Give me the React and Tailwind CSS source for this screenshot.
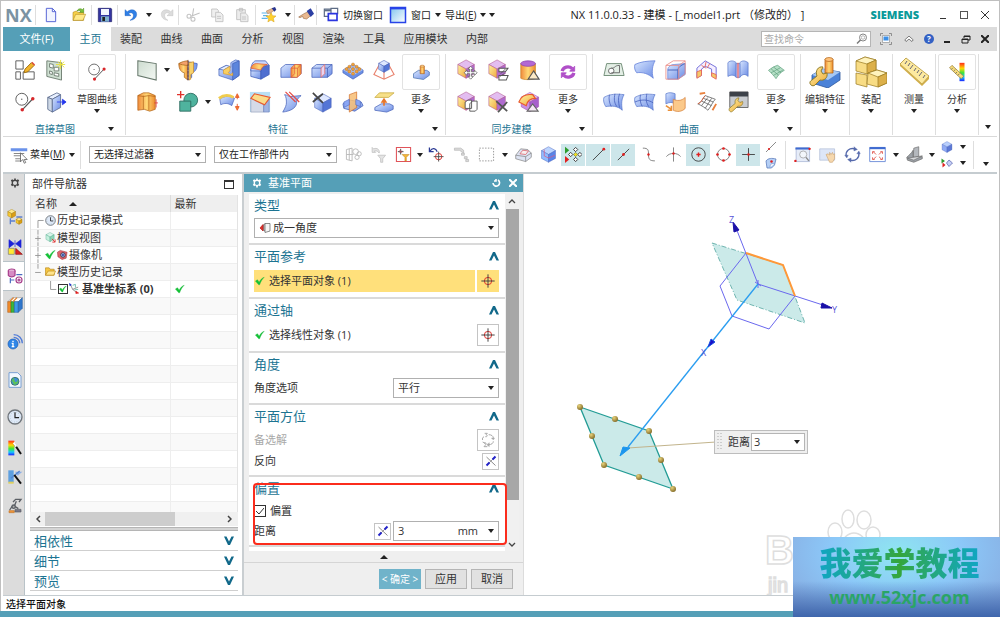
// src/App.jsx
import React, { useState } from 'react';

// ---------- helpers de dibujo ----------

const Cube = ({ x = 12, y = 12, r = 9, t = '#dfe8ff', l = 'url(#blue)', d = '#5475d6', s = '#4560b8' }) => {
  const w = r * 0.9;
  const h = r * 0.5;
  return (
    <g stroke={s} strokeWidth=".6" strokeLinejoin="round">
      <path d={`M${x} ${y - r} L${x + w} ${y - h} L${x} ${y} L${x - w} ${y - h}Z`} fill={t} />
      <path d={`M${x - w} ${y - h} L${x} ${y} V${y + r} L${x - w} ${y + h}Z`} fill={l} />
      <path d={`M${x + w} ${y - h} L${x} ${y} V${y + r} L${x + w} ${y + h}Z`} fill={d} />
    </g>
  );
};

const SyncCube = () => <Cube x={11} y={11} r={10} t="#e3bdf0" l="url(#gold)" d="#b06bd0" s="#b0578f" />;

const Wrench = ({ fill = 'url(#gold)' }) => (
  <path
    d="M3 22c-1-1-1-2.500 0-3.500l6-5c-1-3 1-6 4-6l-1 3 2 2 3-1c1 3-2 6-5 5l-6 5.500c-1 1-2 1-3 0z"
    fill={fill}
    stroke="#8f7b2a"
    strokeWidth=".8"
  />
);

const Defs = () => (
  <svg className="absolute" width="0" height="0" aria-hidden="true">
    <defs>
      <linearGradient id="blue" x1="0" y1="0" x2="1" y2="1">
        <stop offset="0" stopColor="#d8e6ff" />
        <stop offset="1" stopColor="#6a8be4" />
      </linearGradient>
      <linearGradient id="gold" x1="0" y1="0" x2="1" y2="1">
        <stop offset="0" stopColor="#fff0a0" />
        <stop offset="1" stopColor="#eea93a" />
      </linearGradient>
      <linearGradient id="orange" x1="0" y1="0" x2="1" y2="0">
        <stop offset="0" stopColor="#f08a3c" />
        <stop offset=".5" stopColor="#ffd977" />
        <stop offset="1" stopColor="#ee8c2e" />
      </linearGradient>
      <linearGradient id="plane" x1="0" y1="0" x2="1" y2="1">
        <stop offset="0" stopColor="#cddccf" />
        <stop offset="1" stopColor="#f4f8f4" />
      </linearGradient>
      <linearGradient id="rainbow" x1="0" y1="0" x2="0" y2="1">
        <stop offset="0" stopColor="#ff2a1a" />
        <stop offset=".3" stopColor="#ffd800" />
        <stop offset=".55" stopColor="#39e639" />
        <stop offset=".78" stopColor="#18c8ff" />
        <stop offset="1" stopColor="#1a22ff" />
      </linearGradient>
      <linearGradient id="pane" x1="0" y1="0" x2="1" y2="1">
        <stop offset="0" stopColor="#7fc4ee" />
        <stop offset="1" stopColor="#ffffff" />
      </linearGradient>
      <radialGradient id="ball" cx=".35" cy=".3" r=".8">
        <stop offset="0" stopColor="#e8d27a" />
        <stop offset="1" stopColor="#7a6220" />
      </radialGradient>
    </defs>
  </svg>
);

// todos los iconos en una caja de 24x24 (los grandes en 32x32)
const icons = {
  // acceso rapido
  newFile: <path d="M5 2h9l5 5v15H5zM14 2v5h5" fill="#f2f5ff" stroke="#5a68d6" strokeWidth="1.500" />,
  open: (
    <g stroke="#b08a1c" strokeWidth=".9">
      <path d="M3 20V8l5-2 2 2h9v12z" fill="#f6d04a" />
      <path d="M3 20l4-9h15l-4 9z" fill="#ffe98a" />
      <path d="M9 6c2-4 6-4 8-2l2-2v6h-6l2-2c-2-1-3-1-6 0z" fill="#7cc43c" stroke="#4c8d1d" />
    </g>
  ),
  save: (
    <g>
      <path d="M2 2h19l1 1v19H2z" fill="#3434a0" stroke="#20206a" />
      <path d="M6 3h12v9H6z" fill="#f4f6ff" />
      <path d="M6 14h12v8H6z" fill="#7fb1cf" />
      <path d="M8 15h4v6H8z" fill="#222" />
    </g>
  ),
  undo: <path d="M3 4v9h9L8.500 10c3-3 8-1 7 4-.5 3-3 5-5 6 6-.5 10-4 10-9 0-7-8-9-14-4z" fill="#2f7fe6" stroke="#1b5cb8" strokeWidth=".6" />,
  redo: <path d="M21 4v9h-9l3.500-3c-3-3-8-1-7 4 .5 3 3 5 5 6-6-.5-10-4-10-9 0-7 8-9 14-4z" fill="#dcdcdc" stroke="#bbb" strokeWidth=".6" />,
  cut: (
    <g fill="none" stroke="#c2c2c2" strokeWidth="1.600">
      <path d="M13 2 11 14M22 9 9 14" />
      <circle cx="6" cy="14" r="3" />
      <circle cx="12" cy="18.500" r="3" />
    </g>
  ),
  copy: (
    <g fill="#efefef" stroke="#bdbdbd" strokeWidth="1.200">
      <path d="M4 3h8l2 2v10H4z" />
      <path d="M10 8h7l4 4v10H10zM12 14h6M12 17h6" />
    </g>
  ),
  paste: (
    <g fill="#ececec" stroke="#bdbdbd" strokeWidth="1.200">
      <path d="M4 4h13v15H4zM8 2h5v4H8z" />
      <path d="M10 9h7l4 4v9H10zM12 15h6M12 18h6" />
    </g>
  ),
  star: (
    <g>
      <path d="M1 9h9M3 13h7M1 17h9" stroke="#5db4e8" strokeWidth="1.800" />
      <path d="M15 8l2.200 5 5.300.5-4 3.600 1.200 5.300-4.700-2.800-4.700 2.800 1.200-5.300-4-3.600 5.300-.5z" fill="#ffd02e" stroke="#d19b12" strokeWidth=".7" />
      <path d="M8 6l9-4 3 3-6 4-4 1z" fill="#e8b88f" stroke="#8a5a33" strokeWidth=".6" />
      <path d="M16 2l5-2 2 4-3 3z" fill="#27348f" />
    </g>
  ),
  hand: (
    <g>
      <path d="M1 15l8-5 6-3 4 6-6 5-5-1-1-3-4 2z" fill="#e8b88f" stroke="#8a5a33" strokeWidth=".8" />
      <path d="M13 6l6-4 5 8-5 5z" fill="#2c3fa3" />
    </g>
  ),
  switchWin: (
    <g fill="#fff" strokeWidth="1.800">
      <path d="M2 3h14v11H2z" stroke="#5d6c85" />
      <path d="M2 5h14" stroke="#5d6c85" strokeWidth="3" />
      <path d="M12 2h10v8H12z" stroke="#5d6c85" />
      <path d="M8 10h13v10H8z" stroke="#2b35e0" strokeWidth="2.500" />
    </g>
  ),
  window: (
    <g>
      <path d="M2 2h20v20H2z" fill="url(#pane)" stroke="#2743e8" strokeWidth="2" />
      <path d="M2 3h20" stroke="#2743e8" strokeWidth="3" />
    </g>
  ),
  // dibujo directo
  sketch: (
    <g fill="#fff" stroke="#555" strokeWidth="1">
      <path d="M2 2h8v9H2zM2 14h5v8H2zM10 14h12v8H10z" />
      <path d="M11 15l1-4 7-7 3 3-7 7z" fill="#f3b52c" stroke="#9a6b10" />
      <path d="M19 4l3 3 1-1-3-3z" fill="#e1483a" stroke="none" />
    </g>
  ),
  taskSketch: (
    <g stroke="#6c7b6e" strokeWidth="1">
      <path d="M2 2l16 2v19L2 19z" fill="#cfe0d2" />
      <path d="M5 5l4 1v4l-4-1zM5 13l3 1v3l-3-1zM10 9h5v4h-5zM10 15l5 1v3l-5-1z" fill="#fff" />
      <path d="M17 1v10M12 6h10M14 3l7 6M21 3l-7 6" stroke="#e8df3a" />
    </g>
  ),
  circleLine: (
    <g fill="none">
      <circle cx="8.500" cy="9" r="6.500" stroke="#555" />
      <circle cx="8.500" cy="9" r=".7" fill="#555" />
      <path d="M9 20.500 20 9" stroke="#555" strokeWidth="1.200" />
      <circle cx="9" cy="20.500" r="1.900" fill="#d8262a" />
      <circle cx="20.500" cy="8.500" r="1.900" fill="#d8262a" />
    </g>
  ),
  extrude: (
    <g stroke="#5a6a8c" strokeWidth=".9">
      <path d="M3 7l10-5 4 2-9 5z" fill="#e8f0ff" />
      <path d="M3 7l5 2v14l-5-3z" fill="#cfd9e6" />
      <path d="M8 9l9-5v14l-9 5z" fill="url(#blue)" />
      <path d="M13 12h6M19 9l4 3-4 3z" stroke="#2235ee" fill="#2235ee" />
    </g>
  ),
  // caracteristicas
  datum: <path d="M2 2l20 3v18L2 18z" fill="url(#plane)" stroke="#66776b" strokeWidth="1.100" />,
  revolve: (
    <g stroke="#a5661c" strokeWidth=".8">
      <path d="M2 5l10-2v20l-4-3v-5c-5-1-6-6-6-10z" fill="url(#orange)" />
      <path d="M22 5l-10-2v20l4-3v-5c5-1 6-6 6-10z" fill="#7d9eec" stroke="#3e5cb6" />
      <path d="M13 4l5-1v12l-3 2v5l-2 1z" fill="#f8d26a" stroke="#c98a2a" />
      <path d="M2 5c3-2 7-3 10-3v5C8 7 4 6 2 5z" fill="#f3a06a" />
      <path d="M12 1v22" stroke="#633" strokeDasharray="3 1" />
    </g>
  ),
  column: (
    <g stroke="#b3651a" strokeWidth=".8">
      <path d="M2 5l6-3h6l7 3v15l-6 2-6-2-7 1z" fill="url(#orange)" />
      <path d="M8 5v15M14 5v16M2 5l6 1 6-1 7 1" fill="none" />
      <path d="M22 9v9M20 13h4" stroke="#e0322c" />
    </g>
  ),
  unite: (
    <g>
      <circle cx="15" cy="10" r="7.500" fill="#4fb39e" stroke="#2f6f62" />
      <path d="M3 11h12v11H3z" fill="#4fb39e" stroke="#2f6f62" />
      <path d="M0 4h8M4 0v8" stroke="#e0322c" strokeWidth="1.500" />
    </g>
  ),
  bracket: (
    <g stroke="#3c5bb5" strokeWidth=".7">
      <path d="M1 11l8-4 5 2V4l5-3 4 1v16l-7 5-15-5z" fill="url(#blue)" />
      <path d="M16 5l7-3v16l-7 5z" fill="#5c85dc" />
      <path d="M1 11l8-4 4 1-7 4z" fill="#e6efff" />
      <path d="M6 12l7-4v5l-2 2 3 2 2-2v3l-10-2z" fill="#f9cf62" stroke="#d99a2a" />
    </g>
  ),
  blend: (
    <g stroke="#3c5bb5" strokeWidth=".8">
      <path d="M2 11v8l11 3V13z" fill="url(#blue)" />
      <path d="M13 22V13c0-4 3-6 9-6v10z" fill="#4f6fd0" />
      <path d="M7 2h11l4 5c-6 0-9 2-9 6H2c0-6 2-10 5-11z" fill="#c7d8ff" />
      <path d="M2 10c1-3 3-5 6-5l12 1c-4 1-6 3-7 6z" fill="url(#orange)" stroke="#df5a3a" />
    </g>
  ),
  chamfer: (
    <g stroke="#4560b8" strokeWidth=".8">
      <path d="M1 10l5-4h17v10l-5 4H1z" fill="url(#blue)" />
      <path d="M12 10l4-4h7v10l-4 4h-7z" fill="url(#orange)" stroke="#df5a3a" />
      <path d="M12 10h7v10M19 10l4-4M16 6v10l-4 4" fill="none" stroke="#df5a3a" />
    </g>
  ),
  shell: (
    <g stroke="#4560b8" strokeWidth=".8">
      <path d="M1 10l5-4h17v10l-5 4H1z" fill="url(#blue)" />
      <path d="M1 10h17v10M18 10l5-4" fill="none" />
      <path d="M11 10l4-4v10l-4 4z" fill="#e7d4f2" stroke="#e6675f" />
    </g>
  ),
  pattern: (
    <g>
      <path d="M1 12l11-6 11 6v3l-11 7-11-7z" fill="#6a8fe4" stroke="#4560b8" strokeWidth=".7" />
      <path d="M1 12l11-6 11 6-11 6z" fill="#a9c1f7" />
      <g fill="#f0a13c" stroke="#a8600f" strokeWidth=".4">
        <circle cx="12" cy="6" r="1.700" /><circle cx="8" cy="8.500" r="1.700" /><circle cx="16" cy="8.500" r="1.700" />
        <circle cx="5" cy="11" r="1.700" /><circle cx="12" cy="11" r="1.700" /><circle cx="19" cy="11" r="1.700" />
        <circle cx="8" cy="13.500" r="1.700" /><circle cx="16" cy="13.500" r="1.700" /><circle cx="12" cy="16" r="1.700" />
      </g>
    </g>
  ),
  pyramid: (
    <g>
      <path d="M8 4 1 17l11 5 11-5-7-13M12 22v-9" fill="none" stroke="#e8806c" strokeWidth="1.200" />
      <Cube x={12} y={8} r={6.5} />
    </g>
  ),
  offsetFace: (
    <g>
      <path d="M2 9c5-4 11-4 16-1l-3 8c-4-3-8-3-12-1z" fill="url(#blue)" stroke="#4560b8" strokeWidth=".7" />
      <path d="M1 8c5-4 11-4 16-1" fill="none" stroke="#f0cc4e" strokeWidth="3" />
      <path d="M21 5v4M21 14v4M19 7l2-4 2 4zM19 17l2 4 2-4z" stroke="#e9582c" fill="#f0932e" />
    </g>
  ),
  draft: (
    <g>
      <path d="M1 1h22v22H1z" fill="#b9e0f5" />
      <path d="M2 8l14 7v8H2z" fill="#d5dbe8" stroke="#8793b0" strokeWidth=".6" />
      <path d="M16 15l6-6v14h-6z" fill="#9fb4e2" stroke="#6478b4" strokeWidth=".6" />
      <path d="M2 8l4-5 17 4-6 8z" fill="#fadc8a" stroke="#e9582c" strokeWidth="1.200" />
    </g>
  ),
  trim: (
    <g>
      <path d="M5 4c3 0 3 2 7 2l11-1c-4 3-5 6-5 9-1 5-7 8-15 9 3-5 4-8 4-10S7 6 5 4z" fill="url(#blue)" stroke="#4560b8" strokeWidth=".8" />
      <path d="M6 1l11 11M10 1l11 11" stroke="#e64a44" strokeWidth="1.300" />
    </g>
  ),
  deleteBody: (
    <g>
      <Cube x={13} y={13} r={10} />
      <path d="M2 2l11 11M13 3 2 12" stroke="#444" strokeWidth="1.800" />
    </g>
  ),
  mirror: (
    <g>
      <path d="M1 14l8-4 12 2 2 4-9 6-12-3z" fill="url(#blue)" stroke="#4560b8" strokeWidth=".8" />
      <path d="M8 4l8-3v17l-8 5z" fill="#f7bd73" fillOpacity=".85" stroke="#d3722c" strokeWidth=".8" />
      <path d="M2 12l6-3v6l-6 3zM15 9l5 2v6l-5-2z" fill="#8aa6f4" stroke="#4560b8" strokeWidth=".6" />
    </g>
  ),
  emboss: (
    <g>
      <path d="M2 7l5-5h16l-6 5z" fill="#f7e089" stroke="#c4a63a" strokeWidth=".8" />
      <path d="M2 18l7-4h9l4 2v4l-7 3-13-2z" fill="url(#blue)" stroke="#4560b8" strokeWidth=".8" />
      <path d="M12 16v-4M10 12l2-3 2 3z" stroke="#e8762a" fill="#f0932e" strokeWidth="1.800" />
    </g>
  ),
  moreFeature: (
    <g>
      <path d="M3 14l6-4h10l3 2v4l-7 5-12-2z" fill="url(#blue)" stroke="#3c66a8" strokeWidth=".8" />
      <path d="M11 5h5v9h-5z" fill="url(#orange)" stroke="#b3651a" strokeWidth=".8" />
      <ellipse cx="13.500" cy="5" rx="2.500" ry="1.200" fill="#ffd08a" stroke="#b3651a" strokeWidth=".6" />
    </g>
  ),
  // modelado sincronico
  moveFace: (
    <g>
      <SyncCube />
      <path d="M16 8l3 3h-2v3h3v-2l3 3-3 3v-2h-3v3h2l-3 3-3-3h2v-3h-3v2l-3-3 3-3v2h3v-3h-2z" fill="#fff" stroke="#666" strokeWidth=".9" />
    </g>
  ),
  replaceFace: (
    <g>
      <SyncCube />
      <path d="M13 10h10l-3 4h-7zM13 18h10l-2 5h-8z" fill="#fff" stroke="#555" strokeWidth="1.100" />
      <path d="M20 11l-5 5M14 19l5-3" stroke="#555" />
    </g>
  ),
  cylinder: (
    <g>
      <path d="M3 5v16c2 2 14 2 16 0V5z" fill="url(#orange)" stroke="#c08020" strokeWidth=".7" />
      <ellipse cx="11" cy="5" rx="8" ry="3" fill="#b268d4" stroke="#8a3fae" strokeWidth=".8" />
      <path d="M17 13l6 9H11z" fill="#fbe9c6" stroke="#555" strokeWidth="1.200" />
    </g>
  ),
  copyFace: (
    <g>
      <SyncCube />
      <path d="M10 12l3-2h4v9h-7zM15 14l3-3h5v9l-2 2h-6z" fill="#fff" stroke="#555" strokeWidth="1" />
    </g>
  ),
  deleteFace: (
    <g>
      <SyncCube />
      <path d="M10 11l12 11M22 12 12 23" stroke="#555" strokeWidth="2" />
    </g>
  ),
  resizeBlend: (
    <g>
      <Cube x={13} y={12} r={10.5} t="#e3bdf0" l="#c98fe0" d="#a75fcc" s="#a04cac" />
      <path d="M1 12C3 6 8 3 16 4l3 4c-6 0-9 3-10 8z" fill="url(#gold)" stroke="#e9582c" strokeWidth="1.300" />
      <path d="M16 14l6 8H10z" fill="#f5e8f5" stroke="#666" strokeWidth="1.200" />
    </g>
  ),
  moreSync: (
    <g fill="none" stroke="#b04fc8" strokeWidth="4">
      <path d="M5 11c1-5 8-7 12-3M19 13c-1 5-8 7-12 3" />
      <path d="M20 5v6h-6zM4 19v-6h6z" fill="#b04fc8" strokeWidth="1" />
    </g>
  ),
  // superficie
  loft: (
    <g fill="none" stroke="#666" strokeWidth="1">
      <path d="M4 5h16l3 13H1z" fill="#e3eee5" stroke="#6d8a74" />
      <circle cx="9" cy="13" r="3" fill="#fff" />
      <path d="M9 10c5 0 3-3 9-3v8H9" />
    </g>
  ),
  ruled: <path d="M1 6c6-3 14-4 22-4-3 5-4 12-2 19-5-5-12-7-18-6-2-2-3-6-2-9z" fill="url(#blue)" stroke="#6a86dc" strokeWidth=".9" />,
  studio: (
    <g>
      <path d="M3 12c0-4 4-6 7-6l12-1v12l-8 5H3z" fill="url(#blue)" stroke="#6a86dc" strokeWidth=".8" />
      <path d="M14 22v-9c0-4 3-6 8-8M3 12h11" fill="none" stroke="#4560b8" />
      <path d="M1 7l8-5h13v14l-7 6H1zM1 7h14v15M15 7l7-5" fill="none" stroke="#ea8a84" strokeWidth=".9" />
    </g>
  ),
  sweep: (
    <g strokeWidth="1">
      <path d="M1 10l9-8 12 7v11l-5-2v-7l-7-3-4 3v7l-5 2z" fill="#f6efff" stroke="#6a68d8" />
      <path d="M6 7l5 3M11 3l-1 5M15 5l-3 5" stroke="#e6675f" />
      <path d="M1 14l5-2v6l-5 3zM17 15l5 2v5l-5-3z" fill="#f5c968" stroke="#e6675f" />
    </g>
  ),
  thicken: (
    <g stroke="#5a78cc" strokeWidth=".8">
      <path d="M1 4c3-3 7-2 9 0v16c-2-3-6-3-9-1z" fill="url(#blue)" />
      <path d="M14 4c3-3 6-2 9 0v15c-3-3-6-3-9 1z" fill="url(#blue)" />
      <path d="M10 5h4v15h-4z" fill="#d9c7ee" />
      <path d="M12 4v17" stroke="#e6675f" strokeWidth="1.300" />
    </g>
  ),
  meshA: (
    <g fill="none" stroke="#5a78cc" strokeWidth=".8">
      <path d="M1 7c7-4 14-4 22-3-3 5-3 10-2 17-5-5-12-5-18-4-2-3-3-7-2-10z" fill="url(#blue)" />
      <path d="M7 4c-1 5 0 9 2 13M13 3c-1 6-1 9 2 14M18 3c-2 6-1 9 0 15" stroke="#3e58b8" />
    </g>
  ),
  meshB: (
    <g fill="none" stroke="#5a78cc" strokeWidth=".8">
      <path d="M1 7c7-4 14-4 22-3-3 5-3 10-2 17-5-5-12-5-18-4-2-3-3-7-2-10z" fill="url(#blue)" />
      <path d="M7 4c-1 5 0 9 2 13M14 3c-1 6-1 9 2 14M1 12c7-3 14-3 20 1" stroke="#3e58b8" />
    </g>
  ),
  surfExt: (
    <g strokeWidth=".8">
      <path d="M1 3c4-2 7-1 10 0v11c-3-2-6-2-10 0z" fill="url(#blue)" stroke="#5a78cc" />
      <path d="M9 9c4 2 9 2 13-2v12c-4 4-9 4-13 2z" fill="#fbc98a" stroke="#d4803a" />
      <path d="M1 16l6 4M7 16v5H3" fill="none" stroke="#ea9038" strokeWidth="1.800" />
    </g>
  ),
  xform: (
    <g fill="none" stroke="#555" strokeWidth=".8">
      <path d="M2 14c4-1 5-6 8-9l11 4c-3 3-4 7-8 12-3-3-7-5-11-7z" fill="#fff" />
      <path d="M6 11l11 5M8 8l11 4M6 16l7-9M10 19l7-11" />
      <path d="M4 3l6-1M22 14l-4 7" stroke="#e9813e" strokeWidth="2" />
      <path d="M2 14c4-1 5-6 8-9" stroke="#e9582c" />
    </g>
  ),
  winWrench: (
    <g>
      <path d="M3 1h20v17H3z" fill="#c9ccd0" stroke="#666" />
      <path d="M3 1h20v5H3z" fill="#3d4249" />
      <Wrench />
    </g>
  ),
  moreSurf: (
    <g stroke="#5c9d7c" strokeWidth=".8" fill="none">
      <path d="M3 10c4-3 7-5 11-6l8 6c-4 2-7 5-10 10-3-4-6-7-9-10z" fill="#b5dfc6" />
      <path d="M6 8l9 8M9 6l9 7M6 13l11-6M9 16l11-6" />
    </g>
  ),
  // grandes
  editFeature: (
    <g>
      <path d="M3 19l11-6 17 3v8l-12 8-16-5z" fill="#4b82d8" stroke="#2b569c" strokeWidth=".8" />
      <path d="M3 19l11-6 17 3-12 8z" fill="#a6c8f4" />
      <path d="M16 3h8v14h-8z" fill="url(#orange)" stroke="#b3651a" strokeWidth=".8" />
      <ellipse cx="20" cy="3.500" rx="4" ry="2" fill="#ffc27a" stroke="#b3651a" strokeWidth=".7" />
      <path d="M2 29c-2-2-1-4 1-5l5-4c-2-5 1-10 6-9l-2 4 2 3 4-1c1 5-3 8-7 7l-5 5c-1 1-3 1-4 0z" fill="url(#gold)" stroke="#8f7b2a" />
    </g>
  ),
  assembly: (
    <g stroke="#98781f" strokeWidth=".7">
      <path d="M1 5l9-4 11 3v10l-9 4-11-3z" fill="#f8dc84" />
      <path d="M1 5l9-4 11 3-9 4z" fill="#fff3bd" />
      <path d="M21 4v10l-9 4V8z" fill="#dcb04a" />
      <path d="M1 17l11 2v12L1 28z" fill="#f8dc84" />
      <path d="M13 17l9-3 10 3v10l-9 4-11-3z" fill="#f8dc84" />
      <path d="M13 17l9-3 10 3-9 4z" fill="#fff3bd" />
      <path d="M32 17v10l-9 4V21z" fill="#dcb04a" />
    </g>
  ),
  ruler: (
    <g>
      <path d="M2 8l6-6 23 18-7 8z" fill="#fdeaa0" stroke="#b59636" strokeWidth=".8" />
      <path d="M24 28l7-8v3l-7 7L2 10V8z" fill="#d0ad48" />
      <path d="M9 5l-2 3M12 7l-2 3M15 9l-3 4M18 12l-2 3M21 14l-2 3M24 16l-3 4M27 19l-2 3" stroke="#667" />
    </g>
  ),
  analyze: (
    <g>
      <path d="M15 1h6v22h-6z" fill="url(#rainbow)" />
      <path d="M3 7l3-3 14 13-3 3z" fill="#f7dc7a" stroke="#8f7530" strokeWidth=".8" />
      <path d="M7 7l-2 2M10 9l-2 2M12 12l-2 2M15 14l-2 2" stroke="#555" strokeWidth=".8" />
    </g>
  ),
  // barra de seleccion
  menu: (
    <g>
      <path d="M1 3h22v4H1z" fill="#6a92ea" />
      <path d="M5 10h14M5 13h10M7 17h9M7 20h8" stroke="#888" strokeWidth="1.500" />
      <path d="M14 9v12l3-3 2 5 2-1-2-4h4z" fill="#fff" stroke="#555" />
    </g>
  ),
  ghostGrid: (
    <g fill="none" stroke="#b9b9b9" strokeWidth="1.300">
      <path d="M2 5l8-2v18l-8-2zM2 12h10M6 4v16" />
      <circle cx="15" cy="8" r="4" /><circle cx="20" cy="11" r="3" /><circle cx="17" cy="16" r="3" />
    </g>
  ),
  ghostFilter: (
    <g fill="#e4e4e4" stroke="#bbb">
      <path d="M3 2v7h5L6 7c4-1 5 1 7 3 1-5-3-8-8-6z" />
      <path d="M11 13h11l-4 5v5h-3v-5z" />
    </g>
  ),
  filter: (
    <g>
      <path d="M2 2h20v20H2z" fill="#fff" stroke="#e0545a" strokeWidth="1.500" />
      <path d="M8 4v8M4 8h8" stroke="#333" strokeWidth="1.200" />
      <path d="M6 6l4 4M10 6l-4 4" stroke="#d9444a" strokeWidth=".8" />
      <path d="M10 12h10l-4 4v5h-2v-5z" fill="#f4b638" stroke="#bd7e12" strokeWidth=".7" />
    </g>
  ),
  undoTarget: (
    <g fill="none">
      <path d="M2 2v6h6M3 7c3-5 8-4 10 1" stroke="#2b3a94" strokeWidth="1.800" />
      <circle cx="15" cy="15" r="4.500" stroke="#e0322c" strokeWidth="1.300" />
      <path d="M15 8v14M8 15h14" stroke="#444" strokeWidth="1.200" />
    </g>
  ),
  ghostTree: (
    <g fill="#dadada" stroke="#b5b5b5">
      <path d="M2 3h9l4 3v4L9 6H2zM12 10h4v3h-4zM16 15h4v3h-4zM18 19h4v3h-4z" />
    </g>
  ),
  marquee: <path d="M2 3h20v18H2z" fill="none" stroke="#888" strokeWidth="1.200" strokeDasharray="2 2" />,
  slab: (
    <g stroke="#777" strokeWidth=".9">
      <path d="M1 13L8 4l10 1 5 5v6l-8 6-14-4z" fill="#dde3f2" />
      <path d="M1 13l14 2 8-5M15 15v7" fill="none" />
      <path d="M7 11l4-5 8 1-4 5z" fill="#f7f0f0" stroke="#d9444a" />
    </g>
  ),
  solidCube: (
    <g>
      <Cube x={12} y={12} r={11} t="#bcd5ff" l="#8fbaff" d="#5a84e8" />
      <path d="M6 5v9l6 3 9-4" fill="none" stroke="#e0587e" />
    </g>
  ),
  snapAll: (
    <g>
      <path d="M0 1l6 5-6 5z" fill="#2c9c2c" />
      <path d="M0 14l6 5-6 5z" fill="#e02020" />
      <g fill="#fff" stroke="#333" strokeWidth="1.300">
        <path d="M15 2l3 3-3 3-3-3zM15 16l3 3-3 3-3-3zM8 9l3 3-3 3-3-3zM21 9l3 3-3 3-3-3z" />
      </g>
      <path d="M15 9l3 3-3 3-3-3z" fill="#f2e21e" stroke="#333" strokeWidth=".6" />
    </g>
  ),
  endPoint: (
    <g>
      <path d="M4 20 19 5" stroke="#333" strokeWidth="1.200" />
      <circle cx="19.500" cy="4.500" r="2" fill="#e02020" />
    </g>
  ),
  midPoint: (
    <g>
      <path d="M4 20 20 4" stroke="#333" strokeWidth="1.200" />
      <circle cx="12" cy="12" r="2" fill="#e02020" />
    </g>
  ),
  controlPoint: (
    <g fill="none">
      <path d="M4 3c8 0 8 3 8 9s1 9 9 9" stroke="#555" />
      <circle cx="12" cy="12" r="1.700" fill="#e02020" />
    </g>
  ),
  intersection: (
    <g fill="none">
      <path d="M12 2v20M2 15c4-6 16-6 20 0" stroke="#555" />
      <circle cx="12" cy="10.500" r="1.700" fill="#e02020" />
    </g>
  ),
  arcCenter: (
    <g fill="none">
      <circle cx="12" cy="12" r="9.500" stroke="#333" strokeWidth="1.200" />
      <path d="M12 9v6M9 12h6" stroke="#e02020" strokeWidth="2" />
    </g>
  ),
  quadrant: (
    <g fill="#e02020">
      <circle cx="12" cy="12" r="8.500" fill="none" stroke="#555" />
      <circle cx="12" cy="3.500" r="1.900" /><circle cx="12" cy="20.500" r="1.900" />
      <circle cx="3.500" cy="12" r="1.900" /><circle cx="20.500" cy="12" r="1.900" />
    </g>
  ),
  existPoint: (
    <g>
      <path d="M12 3v18M3 12h18" stroke="#333" strokeWidth="1.200" />
      <circle cx="12" cy="12" r="1.800" fill="#e02020" />
    </g>
  ),
  onCurve: (
    <g>
      <path d="M2 22 22 2" stroke="#666" strokeWidth="1.500" />
      <circle cx="8" cy="16" r="2.200" fill="#e02020" />
    </g>
  ),
  onFace: (
    <g>
      <path d="M2 8c4-6 12-6 20-4l-3 12-6 6H4z" fill="#b5cff5" stroke="#5476b8" strokeWidth="1.500" />
      <path d="M10 20c0-6 4-8 9-6" fill="#fff" stroke="#5476b8" />
      <circle cx="13" cy="9" r="2.500" fill="#e02020" />
    </g>
  ),
  zoomWin: (
    <g>
      <path d="M3 3h19v19H3z" fill="#e6ecf8" stroke="#a0b0d0" />
      <path d="M2 2h20v3H2z" fill="#3f6bd0" />
      <circle cx="13" cy="12" r="5" fill="#f2f6fb" stroke="#999" />
      <path d="M17 16l4 5" stroke="#888" strokeWidth="2" />
      <circle cx="22" cy="4" r="1.700" fill="#e02020" /><circle cx="2" cy="21" r="1.700" fill="#e02020" />
    </g>
  ),
  pan: (
    <g>
      <path d="M1 4h21v16H1z" fill="#dde6f8" stroke="#b0bcd6" />
      <path d="M10 12l3-1 2 2v-4l2 3 2-3 1 3 2-1v7l-3 5h-4z" fill="#f6d8ae" stroke="#c89e68" strokeWidth=".8" />
    </g>
  ),
  rotate: (
    <g fill="none" stroke="#566aac" strokeWidth="1.800">
      <path d="M3 14C2 7 8 2 15 4M21 10c1 7-5 12-12 10" />
      <path d="M14 1l5 4-5 2zM10 23l-5-4 5-2zM1 13l3 4 2-4zM18 11l3-4 2 4z" fill="#566aac" strokeWidth=".5" />
    </g>
  ),
  fit: (
    <g>
      <path d="M1 2h22v20H1z" fill="#fff" stroke="#6c8cd8" strokeWidth="1.300" />
      <path d="M1 3h22" stroke="#3f6bd0" strokeWidth="3" />
      <path d="M10 12 6 8M14 12l4-4M10 15l-4 4M14 15l4 4M5 8h3M5 8v3M19 8h-3M19 8v3M5 19h3M5 19v-3M19 19h-3M19 19v-3" stroke="#e0584e" strokeWidth="1.300" />
    </g>
  ),
  section: (
    <g stroke="#666" strokeWidth=".9">
      <path d="M11 3l7-2v13l-8 4z" fill="#b4b8bd" />
      <path d="M1 16c3-3 7-6 9-10v10l13-1v3l-12 5-9-3z" fill="#9ba0a6" />
      <path d="M10 16l13-2-12 6-9-3z" fill="#d8dadd" />
    </g>
  ),
  smallCube: <Cube x={12} y={12} r={11} t="#b9cffc" l="#8faaf4" d="#5c78d4" />,
  showHide: (
    <g>
      <path d="M1 3l7 5-7 5z" fill="#2c9c2c" /><path d="M3 11l6 5-6 5z" fill="#e02020" />
      <path d="M16 6l7 6-7 7-5-7z" fill="#c6cff5" stroke="#5a66b0" strokeWidth="1.500" />
    </g>
  ),
  target: (
    <g fill="none">
      <circle cx="12" cy="12" r="5.500" stroke="#e0322c" strokeWidth="1.500" />
      <path d="M12 2v20M2 12h20" stroke="#444" strokeWidth="1.500" />
    </g>
  ),
  reverse: (
    <g>
      <path d="M3 4l18 17" stroke="#666" strokeWidth="1.500" />
      <path d="M4 20 20 4" stroke="#444" strokeWidth="1.500" strokeDasharray="4 2" />
      <path d="M15 9 21 3M3 21l6-6" stroke="#2323c8" strokeWidth="4" />
    </g>
  ),
  alternate: (
    <g fill="none" stroke="#a9a9a9" strokeWidth="1.500">
      <path d="M13 4c4 0 7 2 7 5M20 14c0 3-3 5-7 5M4 12c-1-2 0-4 2-5M4 15l4 2" />
      <path d="M17 9h5l-2 3zM10 19l4-3v6z" fill="#a9a9a9" strokeWidth=".5" />
      <path d="M7 2h4L9 4c3 0 2 4-1 3M6 17c3-2 5 0 0 5h5" />
    </g>
  ),
  anglePlane: (
    <g strokeWidth="1.500">
      <path d="M9 6l3-3v15l-3-1z" fill="#fff" stroke="#666" />
      <path d="M12 3h10v15l-10 3z" fill="#f5f5f5" stroke="#666" />
      <path d="M8 5l-6 7 6 6z" fill="#e0322c" stroke="#b22" />
    </g>
  ),
  // barra lateral
  asmNav: (
    <g>
      <Cube x={7} y={7} r={6.5} t="#ffe98a" l="#f7c832" d="#dc9f12" s="#9a7512" />
      <path d="M5 14v9M5 18h7M14 12h9" stroke="#5b7fd0" strokeWidth="2" fill="none" />
      <Cube x={18} y={18} r={5} t="#ffe98a" l="#f7c832" d="#dc9f12" s="#9a7512" />
    </g>
  ),
  constraint: (
    <g>
      <path d="M3 1l8 6-8 6zM21 1l-8 6 8 6zM12 2v10" fill="#1b22d8" stroke="#1b22d8" />
      <path d="M2 14h9v9H2z" fill="#ffe934" stroke="#777" />
      <path d="M13 14l10 9H13z" fill="#e02020" stroke="#811" />
    </g>
  ),
  partNav: (
    <g fill="none" strokeWidth="1.800">
      <ellipse cx="7" cy="4" rx="5" ry="2.500" fill="#e8c0dc" stroke="#a83f8c" />
      <path d="M2 4v7c2 3 8 3 10 0V4" fill="#d68cc4" stroke="#a83f8c" />
      <path d="M5 15v8M5 18h6M14 10h9" stroke="#4a6cc0" />
      <circle cx="18" cy="18" r="4.500" stroke="#a83f8c" /><circle cx="18" cy="18" r="1.500" stroke="#a83f8c" />
    </g>
  ),
  books: (
    <g strokeWidth=".7">
      <path d="M1 7l7-6h15l-6 6z" fill="#fff" stroke="#777" />
      <path d="M1 7h5v16H1z" fill="#f08a2a" stroke="#a8540e" />
      <path d="M6 7h5v16H6z" fill="#3fb53c" stroke="#1d7a1c" />
      <path d="M11 7h6v16h-6z" fill="#3f9ae8" stroke="#174f96" />
      <path d="M17 7l6-6v16l-6 6z" fill="#2f77cd" stroke="#174f96" />
      <path d="M4 7l6-6M9 7l6-6" stroke="#e07a1e" strokeWidth="1.800" />
    </g>
  ),
  info: (
    <g fill="none" stroke="#4f7bd8" strokeWidth="2">
      <path d="M10 5c5 0 9 4 9 9M10 1c8 0 13 6 13 13" />
      <circle cx="9" cy="15" r="7.500" fill="#2f86e8" stroke="#1a59b0" strokeWidth="1" />
      <path d="M9 10v2M7 14h2v5M7 19h4" stroke="#fff" />
    </g>
  ),
  web: (
    <g>
      <path d="M3 1h13l5 5v17H3z" fill="#f3f8ff" stroke="#6a96d0" strokeWidth="1.300" />
      <circle cx="12" cy="14" r="6" fill="#3e8fd8" stroke="#2a5f38" />
      <path d="M9 9c4 2 1 5 4 6s2-4 4-2c0 4-3 6-6 6-3-2-1-4-4-5z" fill="#5bc05a" />
    </g>
  ),
  clock: (
    <g fill="none">
      <circle cx="12" cy="12" r="10.500" fill="#dfe9f8" stroke="#70767c" strokeWidth="2" />
      <circle cx="12" cy="12" r="7.500" stroke="#8aa" strokeDasharray="1 3" />
      <path d="M12 5v8h6" stroke="#222" strokeWidth="1.800" />
    </g>
  ),
  palette: (
    <g>
      <path d="M2 1h9v22H2z" fill="url(#rainbow)" />
      <path d="M11 6l10 15" stroke="#111" strokeWidth="3" />
      <path d="M10 4l4 6" stroke="#fff" strokeWidth="3" />
    </g>
  ),
  wand: (
    <g>
      <path d="M2 2h8v18H2z" fill="#5d9fe0" />
      <path d="M2 19h8v3H2z" fill="#e0d05e" />
      <path d="M12 4h11l-7 6z" fill="#8aaee8" />
      <path d="M19 3 6 14" stroke="#5686d0" strokeWidth="2" />
      <path d="M11 9l10 13" stroke="#111" strokeWidth="3" />
    </g>
  ),
  robot: (
    <g fill="none" stroke="#5b5f65" strokeWidth="2">
      <path d="M9 6l4-4h8l-3 4M14 5l-3 7 6 4M8 12l-4 6" />
      <circle cx="10" cy="13" r="2.500" fill="#aaa" />
      <path d="M3 19h8v3H3z" fill="#f0953a" stroke="#c3752a" strokeWidth="1" />
      <path d="M12 17h9v4h-9z" fill="#778" strokeWidth="1" />
    </g>
  ),
  // arbol
  check: <path d="M1 12l5-3 4 6C13 9 17 5 22 3c-5 5-8 10-11 18H9z" fill="#14c436" stroke="#14b436" />,
  viewCube: (
    <g>
      <Cube x={11} y={11} r={10} t="#d9f5ea" l="#c5f0de" d="#8fd8ba" s="#178a62" />
      <path d="M15 15l7 7M22 16v6h-6" stroke="#d33" strokeWidth="2" fill="none" />
    </g>
  ),
  camera: (
    <g>
      <path d="M1 7l6-4 15 4-2 13-9 3-9-6z" fill="#e0646c" stroke="#8f1f2b" />
      <circle cx="13" cy="13" r="5" fill="#9fb4ea" stroke="#334" strokeWidth="1.800" />
      <circle cx="13" cy="13" r="2" fill="#223a9a" />
    </g>
  ),
  folder: (
    <g stroke="#b58211" strokeWidth="1.300">
      <path d="M1 20V4h8l2 3h9v13z" fill="#f5c643" />
      <path d="M1 20l6-9h16l-4 9z" fill="#ffe48c" />
    </g>
  ),
  csys: (
    <g fill="none" strokeWidth="1.500">
      <path d="M3 3l5 11 12-5M8 14l9 7" stroke="#666" />
      <path d="M8 5l6-2v7M12 15l8-1" stroke="#3aa890" />
      <path d="M15 18l6 4-6 1z" fill="#e02020" stroke="#e02020" />
      <path d="M1 1l4 3-3 2z" fill="#2233cc" stroke="#2233cc" />
    </g>
  ),
  gear: (
    <path
      fillRule="evenodd"
      d="M10 1h4v3l2 1 3-2 3 3-2 3v5l2 2-3 4-3-2-2 1v4h-4v-4l-2-1-3 2-3-4 2-2V9L2 6l3-3 3 2 2-1zM12 7a5 5 0 1 0 0 10 5 5 0 0 0 0-10z"
      fill="currentColor"
    />
  ),
  search: (
    <g fill="none" stroke="#777" strokeWidth="1.800">
      <circle cx="14" cy="9" r="7" /><circle cx="14" cy="9" r="3.500" strokeWidth="1" />
      <path d="M9 14l-7 7" strokeWidth="3" />
    </g>
  ),
  fullScreen: (
    <g fill="none" stroke="#777" strokeWidth="1.500">
      <path d="M1 6V1h5M18 1h5v5M23 18v5h-5M6 23H1v-5" />
      <path d="M5 5h14v14H5z" fill="#fff" stroke="#999" />
      <path d="M7 7h10v8H7z" fill="#3b8fe6" stroke="none" />
    </g>
  ),
  collapse: <path d="M2 14l10-9 10 9-3 4-7-6-7 6z" fill="#fff" stroke="#555" strokeWidth="1.800" />,
};

const Icon = ({ name, className = 'size-6', box = 24 }) => (
  <svg viewBox={`0 0 ${box} ${box}`} className={`shrink-0 ${className}`} aria-hidden="true">
    {icons[name]}
  </svg>
);

const Caret = ({ className = '' }) => (
  <svg viewBox="0 0 6 4" className={`h-1 w-1.5 shrink-0 ${className}`} aria-hidden="true">
    <path d="M0 0h6L3 4z" fill="#222" />
  </svg>
);

const CaretButton = ({ label, className = 'w-2' }) => (
  <button type="button" aria-label={label} className={`flex h-4 shrink-0 items-center justify-center ${className}`}>
    <Caret />
  </button>
);

const Chevron = ({ up }) => (
  <svg viewBox="0 0 10 9" className={`h-[9px] w-2.5 shrink-0 ${up ? '' : 'rotate-180'}`} aria-hidden="true">
    <path d="M0 8.500 4 0h2l4 8.500H7.500L5 3.500 2.500 8.500z" fill="#12698a" />
  </svg>
);

const Sep = ({ className = 'h-5' }) => <span className={`w-px shrink-0 bg-[#dedede] ${className}`} />;

// ---------- barra de titulo ----------

const QuickButton = ({ icon, label, className = 'w-6' }) => (
  <button type="button" aria-label={label} className={`flex h-6 shrink-0 items-center justify-center ${className}`}>
    <Icon name={icon} className="size-4" />
  </button>
);

const TitleBar = () => (
  <header className="flex h-[26px] items-center bg-white pt-0.5 text-[10px] text-[#222]">
    <span className="w-8 pl-0.5 text-lg leading-6 font-bold text-[#7b93a3]">NX</span>
    <Sep />
    <QuickButton icon="newFile" label="新建" className="w-[30px]" />
    <QuickButton icon="open" label="打开" className="w-[25px]" />
    <Sep />
    <QuickButton icon="save" label="保存" className="w-[25px]" />
    <Sep />
    <QuickButton icon="undo" label="撤消" className="w-[25px]" />
    <CaretButton label="撤消列表" className="w-3" />
    <QuickButton icon="redo" label="重做" className="w-[23px]" />
    <Sep />
    <QuickButton icon="cut" label="剪切" className="w-[27px]" />
    <QuickButton icon="copy" label="复制" className="w-[22px]" />
    <QuickButton icon="paste" label="粘贴" className="w-[27px]" />
    <Sep />
    <QuickButton icon="star" label="重复命令" className="w-[26px]" />
    <CaretButton label="重复命令列表" className="w-3" />
    <Sep className="h-5" />
    <QuickButton icon="hand" label="触控模式" className="w-[21px]" />
    <Sep />
    <button type="button" className="flex h-6 items-center gap-1 pl-1.5">
      <Icon name="switchWin" className="size-4" />
      切换窗口
    </button>
    <button type="button" className="ml-1.5 flex h-6 items-center gap-1">
      <Icon name="window" className="size-[18px]" />
      窗口
      <Caret />
    </button>
    <button type="button" className="ml-1 flex h-6 items-center gap-1">
      <span>导出(<u>E</u>)</span>
      <Caret />
    </button>
    <CaretButton label="自定义" className="w-3" />
    <h1 className="ml-[72px] text-[11px] leading-4 whitespace-pre">NX 11.0.0.33 - 建模 - [_model1.prt （修改的） ]</h1>
    <span className="ml-auto text-[11px] leading-4 font-extrabold text-[#0a9a9a]">SIEMENS</span>
    <div className="ml-4 flex items-center gap-[5px] pr-1">
      <button type="button" aria-label="最小化" className="flex size-4 items-end justify-center pb-1">
        <span className="h-px w-1.5 bg-[#333]" />
      </button>
      <button type="button" aria-label="最大化" className="flex size-4 items-center justify-center">
        <span className="size-2 border border-[#555]" />
      </button>
      <button type="button" aria-label="关闭" className="flex size-4 items-center justify-center">
        <svg viewBox="0 0 8 8" className="size-2"><path d="M0 0l8 8M8 0 0 8" stroke="#333" /></svg>
      </button>
    </div>
  </header>
);

// ---------- pestañas ----------

const tabs = [
  ['主页', 'w-[41px]'],
  ['装配', 'w-10'],
  ['曲线', 'w-[41px]'],
  ['曲面', 'w-10'],
  ['分析', 'w-[41px]'],
  ['视图', 'w-10'],
  ['渲染', 'w-[41px]'],
  ['工具', 'w-10'],
  ['应用模块', 'w-[63px]'],
  ['内部', 'w-10'],
];

const TabBar = () => {
  const [active, setActive] = useState('主页');
  return (
    <nav className="flex h-6 items-stretch bg-[#dcdcdc] text-[11px] text-[#333]">
      <button type="button" className="w-[67px] bg-[#559fb7] text-white">文件(F)</button>
      {tabs.map(([name, width]) => (
        <button
          key={name}
          type="button"
          onClick={() => setActive(name)}
          className={`${width} ${active === name ? 'bg-white text-[#1c7492]' : ''}`}
        >
          {name}
        </button>
      ))}
      <div className="ml-auto flex items-center gap-[7px] pr-1.5">
        <label className="flex h-4 w-[110px] items-center border border-[#b5b5b5] bg-white px-0.5">
          <input aria-label="查找命令" placeholder="查找命令" className="w-0 flex-1 text-[10px] outline-none placeholder:text-[#aaa]" />
          <Icon name="search" className="size-3" />
        </label>
        <button type="button" aria-label="全屏" className="flex size-4 items-center justify-center"><Icon name="fullScreen" className="size-3" /></button>
        <button type="button" aria-label="最小化功能区" className="flex size-4 items-center justify-center"><Icon name="collapse" className="size-2.5" /></button>
        <button type="button" aria-label="帮助" className="flex size-2.5 items-center justify-center rounded-full bg-[#3461c4] text-[8px] leading-none font-bold text-white">?</button>
        <button type="button" aria-label="最小化部件" className="flex h-4 w-3 items-end justify-center pb-1"><span className="h-0.5 w-1.5 bg-[#222]" /></button>
        <button type="button" aria-label="还原部件" className="flex h-4 w-3 items-center justify-center">
          <svg viewBox="0 0 10 9" className="h-[9px] w-2.5"><path d="M3 3V1h6v4H7M1 4h6v4H1zM1 4.500h6M3 1.500h6" fill="none" stroke="#222" /></svg>
        </button>
        <button type="button" aria-label="关闭部件" className="flex h-4 w-3 items-center justify-center">
          <svg viewBox="0 0 8 8" className="size-2"><path d="M0 0l8 8M8 0 0 8" stroke="#222" strokeWidth="2" /></svg>
        </button>
      </div>
    </nav>
  );
};

// ---------- cinta ----------

// '>' es una flecha desplegable, '' un hueco del mismo ancho
const ToolRow = ({ items }) => (
  <div className="flex h-8 items-center">
    {items.map((item, i) => {
      if (item === '>') return <CaretButton key={i} label="更多选项" className="w-2.5" />;
      if (item === '') return <span key={i} className="w-2.5 shrink-0" />;
      return (
        <button key={i} type="button" aria-label={item} className="flex w-[31px] shrink-0 justify-center">
          <Icon name={item} className="size-[22px]" />
        </button>
      );
    })}
  </div>
);

const MoreButton = ({ icon, label, boxed = true, large }) => (
  <button type="button" className="flex w-10 shrink-0 flex-col items-center text-[10px] leading-4 whitespace-nowrap text-[#333]">
    <span className={`flex h-9 w-[38px] items-center justify-center ${boxed ? 'rounded-xs border border-[#e2e2e2]' : ''}`}>
      {large ? <Icon name={icon} box={32} className="size-8" /> : <Icon name={icon} className="size-5" />}
    </span>
    <span className="pt-px">{label}</span>
    <Caret className="mt-0.5" />
  </button>
);

const Group = ({ title, rows, more, className }) => (
  <section className={`flex shrink-0 flex-col border-r border-[#dedede] ${className}`}>
    <div className="flex h-[70px] justify-between">
      <div>
        {rows.map((row, i) => <ToolRow key={i} items={row} />)}
      </div>
      <MoreButton {...more} />
    </div>
    <div className="relative flex items-center justify-center pr-4 text-[10px] leading-3 text-[#1c7492]">
      <h2>{title}</h2>
      <CaretButton label={`${title}选项`} className="absolute right-0 w-3" />
    </div>
  </section>
);

const Ribbon = () => (
  <div className="flex h-[86px] border-b border-[#d9d9d9] bg-white pt-[3px] pb-px">
    <Group
      title="直接草图"
      className="w-[123px] pr-2 pl-1.5"
      rows={[['sketch', 'taskSketch'], ['circleLine', 'extrude']]}
      more={{ icon: 'circleLine', label: '草图曲线' }}
    />
    <Group
      title="特征"
      className="w-80 pr-1 pl-[5px]"
      rows={[
        ['datum', '>', 'revolve', '', 'bracket', 'blend', 'chamfer', 'shell', 'pattern', 'pyramid'],
        ['column', '', 'unite', '>', 'offsetFace', 'draft', 'trim', 'deleteBody', 'mirror', 'emboss'],
      ]}
      more={{ icon: 'moreFeature', label: '更多' }}
    />
    <Group
      title="同步建模"
      className="w-[147px] pr-1 pl-[5px]"
      rows={[['moveFace', 'replaceFace', 'cylinder'], ['copyFace', 'deleteFace', 'resizeBlend']]}
      more={{ icon: 'moreSync', label: '更多' }}
    />
    <Group
      title="曲面"
      className="w-52 pr-1 pl-[5px]"
      rows={[['loft', 'ruled', 'studio', 'sweep', 'thicken'], ['meshA', 'meshB', 'surfExt', 'xform', 'winWrench']]}
      more={{ icon: 'moreSurf', label: '更多' }}
    />
    <div className="flex w-[49px] shrink-0 justify-center border-r border-[#dedede]"><MoreButton icon="editFeature" label="编辑特征" boxed={false} large /></div>
    <div className="flex w-[43px] shrink-0 justify-center border-r border-[#dedede]"><MoreButton icon="assembly" label="装配" boxed={false} large /></div>
    <div className="flex w-[43px] shrink-0 justify-center border-r border-[#dedede]"><MoreButton icon="ruler" label="测量" boxed={false} large /></div>
    <div className="flex w-[43px] shrink-0 justify-center border-r border-[#dedede]"><MoreButton icon="analyze" label="分析" /></div>
    <div className="flex flex-1 items-end justify-center"><CaretButton label="功能区选项" /></div>
  </div>
);

// ---------- barra de seleccion ----------

const Select = ({ label, options, className = '', children }) => (
  <span className={`grid items-center border border-[#b0b0b0] bg-white ${className}`}>
    <select aria-label={label} className={`col-start-1 row-start-1 w-full appearance-none self-stretch bg-transparent outline-none ${children ? 'pl-[18px]' : 'pl-1'}`}>
      {options.map((o) => <option key={o}>{o}</option>)}
    </select>
    {children}
    <Caret className="pointer-events-none col-start-1 row-start-1 mr-1 justify-self-end" />
  </span>
);

const Tool = ({ icon, on }) => (
  <button type="button" aria-label={icon} aria-pressed={!!on} className={`flex h-[22px] w-[25px] shrink-0 items-center justify-center ${on ? 'border-r border-white bg-[#cde6ea]' : ''}`}>
    <Icon name={icon} className="size-[17px]" />
  </button>
);

const SmallTool = ({ icon, className = 'w-5' }) => (
  <button type="button" aria-label={icon} className={`flex h-4 items-center justify-center ${className}`}>
    <Icon name={icon} className="size-3" />
  </button>
);

const SelectionBar = () => (
  <div className="flex h-[37px] items-center border-b-2 border-[#c5ccd0] bg-white text-[10px] text-[#222]">
    <button type="button" className="flex h-6 w-[77px] items-center gap-0.5 pl-[7px]">
      <Icon name="menu" className="size-[18px]" />
      <span className="pr-0.5">菜单(<u>M</u>)</span>
      <Caret />
    </button>
    <Sep className="h-7" />
    <Select label="选择过滤器" options={['无选择过滤器']} className="ml-2 h-[17px] w-[117px]" />
    <Select label="选择范围" options={['仅在工作部件内']} className="mr-1 ml-2 h-[17px] w-[123px]" />
    <Tool icon="ghostGrid" />
    <Tool icon="ghostFilter" />
    <Tool icon="filter" />
    <CaretButton label="过滤器选项" />
    <Tool icon="undoTarget" />
    <Tool icon="ghostTree" />
    <Tool icon="marquee" />
    <CaretButton label="选择方式" className="w-3" />
    <Tool icon="slab" />
    <Tool icon="solidCube" />
    <Tool icon="snapAll" on />
    <Tool icon="endPoint" on />
    <Tool icon="midPoint" on />
    <Tool icon="controlPoint" />
    <Tool icon="intersection" />
    <Tool icon="arcCenter" on />
    <Tool icon="quadrant" />
    <Tool icon="existPoint" on />
    <div><SmallTool icon="onCurve" /><SmallTool icon="onFace" /></div>
    <Sep className="mx-1 h-7" />
    <Tool icon="zoomWin" />
    <Tool icon="pan" />
    <Tool icon="rotate" />
    <Tool icon="fit" />
    <CaretButton label="适合窗口选项" className="w-3" />
    <Tool icon="section" />
    <CaretButton label="截面选项" className="w-2.5" />
    <div><SmallTool icon="smallCube" /><SmallTool icon="showHide" /></div>
    <div><CaretButton label="样式选项" className="w-3" /><CaretButton label="显示选项" className="w-3" /></div>
    <Sep className="ml-1 h-7" />
    <div className="flex flex-1 justify-center self-end"><CaretButton label="工具条选项" /></div>
  </div>
);

// ---------- navegador de piezas ----------

const sideTabs = [
  ['gear', 'h-[18px]'],
  ['asmNav', 'mt-2.5 h-[30px]'],
  ['constraint', 'h-[29px]'],
  ['partNav', 'h-[30px]'],
  ['books', 'h-[28px]'],
  ['info', 'mt-1 h-[38px]'],
  ['web', 'h-[38px]'],
  ['clock', 'mt-0.5 h-8'],
  ['palette', 'h-[29px]'],
  ['wand', 'h-[29px]'],
  ['robot', 'h-[29px]'],
];

const SideBar = () => (
  <aside className="flex w-[22px] shrink-0 flex-col border-r border-[#b9c3c8] bg-[#dcdcdc] text-[#444]">
    {sideTabs.map(([name, size]) => (
      <button
        key={name}
        type="button"
        aria-label={name}
        className={`flex shrink-0 items-center justify-center pl-0.5 ${size} ${name === 'partNav' ? 'border-y border-[#b9c3c8] bg-white' : ''}`}
      >
        <Icon name={name} className={name === 'gear' ? 'size-2.5' : 'size-4'} />
      </button>
    ))}
  </aside>
);

const branches = {
  line: <path d="M7 17V9h6" />,
  plus: <path d="M7 0v5M7 13v4M4 9h6M7 6v6" />,
  minus: <path d="M7 0v5M4 9h6" />,
  leaf: <path d="M20 0v9h6" />,
};

const treeRows = [
  { branch: 'line', icons: ['clock'], text: '历史记录模式' },
  { branch: 'plus', icons: ['viewCube'], text: '模型视图' },
  { branch: 'plus', icons: ['check', 'camera'], text: '摄像机' },
  { branch: 'minus', icons: ['folder'], text: '模型历史记录' },
  { branch: 'leaf', icons: ['csys'], text: '基准坐标系 (0)', box: true, latest: true },
];

const emptyRows = Array.from({ length: 14 }, (_, i) => i);

const PartNavigator = () => (
  <div className="flex w-[219px] shrink-0 flex-col border-r-2 border-[#c9ced1] bg-white pr-1 pl-[5px] text-[11px] text-[#333]">
    <div className="flex h-[21px] shrink-0 items-center justify-between pr-1 pl-0.5">
      <h2>部件导航器</h2>
      <button type="button" aria-label="展开面板" className="h-[9px] w-2.5 border border-t-2 border-[#333]" />
    </div>
    <div className="min-h-0 grow basis-0 overflow-hidden border-x border-[#e3e3e3]">
      <table className="w-full table-fixed border-collapse">
        <thead>
          <tr className="h-[17px] bg-[#efefef] text-left">
            <th className="w-[139px] border-r border-[#dcdcdc] py-0 pl-1 font-normal">
              <span className="flex items-center gap-3 leading-4">
                名称
                <svg viewBox="0 0 8 4" className="h-1 w-2"><path d="M0 4h8L4 0z" fill="#222" /></svg>
              </span>
            </th>
            <th className="py-0 pl-1 leading-4 font-normal">最新</th>
          </tr>
        </thead>
        <tbody>
          {treeRows.map((row, i) => (
            <tr key={row.text} className={`h-[17px] border-b border-[#eeeeee] ${i % 2 ? 'bg-[#f9f9f9]' : ''}`}>
              <td className="border-r border-[#eeeeee] p-0">
                <span className="flex h-4 items-center gap-px leading-4 whitespace-nowrap">
                  <svg viewBox={row.box ? '0 0 26 17' : '0 0 13 17'} className={`h-4 shrink-0 ${row.box ? 'w-[26px]' : 'w-[13px]'}`}>
                    <g fill="none" stroke="#999">{branches[row.branch]}</g>
                  </svg>
                  {row.box && (
                    <span className="grid shrink-0 items-center justify-items-center">
                      <input type="checkbox" defaultChecked aria-label={row.text} className="col-start-1 row-start-1 size-2.5 appearance-none border border-[#333] bg-white" />
                      <Icon name="check" className="pointer-events-none col-start-1 row-start-1 size-2" />
                    </span>
                  )}
                  {row.icons.map((n) => <Icon key={n} name={n} className="size-[11px]" />)}
                  <span className={row.box ? 'pl-px font-bold' : ''}>{row.text}</span>
                </span>
              </td>
              <td className="p-0 pl-1">{row.latest && <Icon name="check" className="size-2.5" />}</td>
            </tr>
          ))}
          {emptyRows.map((i) => (
            <tr key={i} className={`h-[17px] border-b border-[#eeeeee] ${i % 2 ? '' : 'bg-[#f9f9f9]'}`}>
              <td className="border-r border-[#eeeeee]" />
              <td />
            </tr>
          ))}
        </tbody>
      </table>
    </div>
    <div className="flex h-[14px] shrink-0 items-center justify-between bg-[#f0f0f0] px-1.5">
      <svg viewBox="0 0 5 8" className="h-2 w-[5px]"><path d="M4 1 1 4l3 3" fill="none" stroke="#444" strokeWidth="1.500" /></svg>
      <span className="mr-auto ml-1 h-full w-[130px] bg-[#cdcdcd]" />
      <svg viewBox="0 0 5 8" className="h-2 w-[5px]"><path d="M1 1l3 3-3 3" fill="none" stroke="#444" strokeWidth="1.500" /></svg>
    </div>
    <div className="mt-px h-1 shrink-0 border-y border-[#b5b5b5] bg-[#d5d5d5]" />
    <div className="mb-1 shrink-0 text-[13px] text-[#1c7492]">
      {['相依性', '细节', '预览'].map((name) => (
        <button key={name} type="button" className="flex h-5 w-full items-center justify-between border-b border-[#cfcfcf] pr-1 pl-1 leading-4">
          {name}
          <Chevron />
        </button>
      ))}
    </div>
  </div>
);

// ---------- dialogo plano de referencia ----------

const Section = ({ title, className = '', children }) => (
  <section className={`border-b-2 border-[#dadada] bg-white pr-1.5 pl-[5px] ${className}`}>
    <button type="button" className="flex h-6 w-full items-center justify-between pb-0.5 text-left text-[13px] leading-4 text-[#1c7492]">
      {title}
      <Chevron up />
    </button>
    {children}
  </section>
);

const IconButton = ({ icon, label, size = 'size-[22px]' }) => (
  <button type="button" aria-label={label} className={`flex shrink-0 items-center justify-center border border-[#c4c4c4] bg-white ${size}`}>
    <Icon name={icon} className={size === 'size-[22px]' ? 'size-4' : 'size-3'} />
  </button>
);

const DatumDialog = () => {
  const [offset, setOffset] = useState(true);
  const [distance, setDistance] = useState('3');

  return (
    <div role="dialog" aria-label="基准平面" className="flex w-[280px] shrink-0 flex-col border-r border-[#dcdcdc] bg-[#efefef] text-[11px] text-[#333]">
      <div className="flex h-[18px] shrink-0 items-center bg-[#559fb7] pr-1.5 pl-2 text-white">
        <Icon name="gear" className="size-2.5" />
        <h2 className="ml-1.5 flex-1 leading-4">基准平面</h2>
        <button type="button" aria-label="重置" className="mr-2">
          <svg viewBox="0 0 10 10" className="size-2.5"><path d="M2 5a3.300 3.300 0 1 0 5-3M5 1v2H3" fill="none" stroke="#fff" strokeWidth="1.600" /></svg>
        </button>
        <button type="button" aria-label="关闭对话框">
          <svg viewBox="0 0 8 8" className="size-2"><path d="M0 0l8 8M8 0 0 8" stroke="#fff" strokeWidth="2" /></svg>
        </button>
      </div>

      <div className="flex flex-1 pt-0.5 pr-1 pl-[5px]">
        <div className="w-0 flex-1 bg-white">
          <Section title="类型" className="pb-[5px]">
            <Select label="类型" options={['成一角度']} className="h-5">
              <Icon name="anglePlane" className="pointer-events-none col-start-1 row-start-1 ml-1 size-3" />
            </Select>
          </Section>
          <Section title="平面参考" className="pb-1">
            <div className="flex h-6 items-center gap-0.5">
              <button type="button" className="flex h-[22px] flex-1 items-center gap-1 bg-[#ffe07b] pl-px">
                <Icon name="check" className="size-2.5" />
                选择平面对象 (1)
              </button>
              <button type="button" aria-label="选择平面" className="flex size-[22px] items-center justify-center bg-[#ffe07b]">
                <Icon name="target" className="size-4" />
              </button>
            </div>
          </Section>
          <Section title="通过轴" className="pb-1">
            <div className="flex h-6 items-center justify-between">
              <span className="flex items-center gap-1 pl-px">
                <Icon name="check" className="size-2.5" />
                选择线性对象 (1)
              </span>
              <IconButton icon="target" label="选择轴" />
            </div>
          </Section>
          <Section title="角度" className="pb-1">
            <div className="flex h-[22px] items-center justify-between">
              角度选项
              <Select label="角度选项" options={['平行']} className="h-5 w-[106px]" />
            </div>
          </Section>
          <Section title="平面方位" className="pb-1">
            <div className="flex h-[22px] items-center justify-between text-[#a8a8a8]">
              备选解
              <IconButton icon="alternate" label="备选解" />
            </div>
            <div className="flex h-5 items-center justify-between">
              反向
              <IconButton icon="reverse" label="反向" size="size-[17px]" />
            </div>
          </Section>
          {/* la seccion resaltada en rojo */}
          <div className="relative">
            <Section title="偏置" className="pb-1">
              <label className="flex h-5 items-center gap-1">
                <span className="grid items-center justify-items-center">
                  <input
                    type="checkbox"
                    checked={offset}
                    onChange={(e) => setOffset(e.target.checked)}
                    className="col-start-1 row-start-1 size-3 appearance-none border border-[#333] bg-white"
                  />
                  {offset && (
                    <svg viewBox="0 0 8 8" className="pointer-events-none col-start-1 row-start-1 size-2"><path d="M0 4l3 3 5-6" fill="none" stroke="#333" /></svg>
                  )}
                </span>
                偏置
              </label>
              <div className="flex h-5 items-center gap-0.5">
                <label htmlFor="distance" className="flex-1">距离</label>
                <IconButton icon="reverse" label="反向偏置" size="size-[17px]" />
                <span className="flex h-5 w-[106px] items-center border border-[#b0b0b0] bg-white pr-1 pl-1">
                  <input id="distance" value={distance} onChange={(e) => setDistance(e.target.value)} className="w-0 flex-1 outline-none" />
                  <span className="pr-2.5">mm</span>
                  <Caret />
                </span>
              </div>
            </Section>
            <div className="pointer-events-none absolute top-1.5 -right-0.5 bottom-0.5 left-1 rounded-sm border-2 border-[#fb2c1c]" />
          </div>
        </div>
        <div className="flex w-[14px] flex-col items-center bg-[#f0f0f0]">
          <svg viewBox="0 0 8 5" className="my-[5px] h-[5px] w-2 shrink-0"><path d="M1 4l3-3 3 3" fill="none" stroke="#444" strokeWidth="1.300" /></svg>
          <span className="h-[291px] w-[13px] bg-[#a7a7a7]" />
          <svg viewBox="0 0 8 5" className="mt-auto mb-1 h-[5px] w-2 shrink-0"><path d="M1 1l3 3 3-3" fill="none" stroke="#444" strokeWidth="1.300" /></svg>
        </div>
      </div>

      <div className="flex h-3 shrink-0 items-center justify-center border-b border-[#d5d5d5]">
        <svg viewBox="0 0 8 4" className="h-1 w-2"><path d="M0 4h8L4 0z" fill="#222" /></svg>
      </div>
      <div className="flex h-8 shrink-0 items-center justify-end gap-1 pr-2.5">
        <button type="button" className="h-5 w-[42px] bg-[#70b3ca] text-[10px] whitespace-nowrap text-white">&lt; 确定 &gt;</button>
        <button type="button" className="h-5 w-[42px] border border-[#b5b5b5] bg-[#e1e1e1]">应用</button>
        <button type="button" className="h-5 w-[42px] border border-[#b5b5b5] bg-[#e1e1e1]">取消</button>
      </div>
    </div>
  );
};

// ---------- area grafica ----------

const handles = [
  [580, 407], [615, 419], [649, 431], [661, 460], [673, 489], [639, 477], [604, 465], [592, 436],
];

const Viewport = () => (
  <main className="relative min-w-0 flex-1 overflow-hidden bg-white">
    <svg viewBox="524 174 473 421" className="absolute top-0 left-0 h-[421px] w-[473px]" role="img" aria-label="模型视图">
      <path d="M712 243 783 265 805 323 737 300z" fill="#cbeae9" stroke="#6fb5b0" strokeDasharray="5 2 1 2" />
      <g fill="none" stroke="#6a68ee">
        <path d="M746 253 720 286 732 316 769 329 795 296" />
        <path d="M758 284 736 228M758 284 826 306" />
        <path d="M755 282l6 4M758 280v8" />
      </g>
      <path d="M746 253 783 265 795 296" fill="none" stroke="#ff9838" strokeWidth="2" />
      <path d="M733 222l6 8-5 2zM832 308l-10-5-1 5z" fill="#1a10a8" stroke="#1a10a8" />
      <path d="M580 407 649 431 673 489 604 465z" fill="#cbeae9" stroke="#239c95" strokeWidth="1.300" />
      <path d="M628 448 716 442" stroke="#c2b48c" />
      <path d="M758 284 628 447" stroke="#2a9df0" strokeWidth="1.300" />
      <path d="M708 347l3-8 4 3z" fill="#1a10c8" stroke="#1a50e0" />
      <path d="M620 456l3-9 7 1z" fill="#1c96ee" stroke="#1c96ee" />
      {handles.map(([x, y]) => <circle key={`${x}-${y}`} cx={x} cy={y} r="3" fill="url(#ball)" />)}
      <g fill="#5553d8" fontSize="9">
        <text x="729" y="223">Z</text>
        <text x="832" y="313">Y</text>
        <text x="701" y="356">X</text>
      </g>
      {/* marca de agua */}
      <g fill="#fff" stroke="#dedede" strokeWidth="1.500" fontFamily="Liberation Sans">
        <ellipse cx="848" cy="519" rx="6" ry="9" />
        <ellipse cx="864" cy="520" rx="7" ry="9" />
        <ellipse cx="835" cy="532" rx="7" ry="9" />
        <ellipse cx="873" cy="535" rx="7" ry="8" />
        <path d="M840 548c4-20 24-20 28 0z" />
        <text x="765" y="564" fontSize="40" fontWeight="700">B</text>
        <text x="768" y="592" fontSize="20">jin</text>
      </g>
    </svg>
    <div className="absolute top-[256px] left-[190px] flex h-6 w-[94px] items-center border border-[#bdbdbd] bg-[#efefef] pr-0.5 pl-0.5 text-[10px] text-[#333]">
      <svg viewBox="0 0 5 18" className="h-[18px] w-[5px]"><path d="M1 0v18M4 0v18" stroke="#aaa" strokeDasharray="1 2" /></svg>
      <label htmlFor="floatDistance" className="px-px pl-1.5 text-[11px]">距离</label>
      <span className="flex h-[18px] flex-1 items-center border border-[#b5b5b5] bg-white pr-1 pl-0.5">
        <input id="floatDistance" defaultValue="3" className="w-0 flex-1 text-[11px] outline-none" />
        <Caret />
      </span>
    </div>
  </main>
);

const App = () => (
  <div className="relative flex min-h-screen flex-col overflow-hidden bg-white font-['Open_Sans','Noto_Sans_CJK_SC',sans-serif]">
    <Defs />
    <div className="flex flex-1 flex-col border-x border-t border-[#bfbfbf] pr-0.5 pl-0.5">
      <TitleBar />
      <TabBar />
      <Ribbon />
      <SelectionBar />
      <div className="flex flex-1">
        <SideBar />
        <PartNavigator />
        <DatumDialog />
        <Viewport />
      </div>
      <p className="h-4 shrink-0 border-t border-[#c5ccd0] pl-[3px] text-[10px] leading-4 font-medium text-[#111]">选择平面对象</p>
    </div>
    <footer className="h-1.5 shrink-0 bg-[#559fb7]" />

    <div className="absolute right-0 bottom-0 flex h-20 w-[207px] flex-col items-center bg-[linear-gradient(to_bottom,transparent_55%,#3f66ac_100%),radial-gradient(ellipse_at_50%_20%,#8fe6f0_0%,#8cc8f8_45%,#86a4da_100%)] pt-1.5 pl-1.5">
      <strong className="bg-linear-to-r from-[#12a5c4] via-[#34a63a] to-[#12a5c4] bg-clip-text text-[32px] leading-10 font-black text-transparent">我爱学教程</strong>
      <a href="#top" className="text-lg leading-7 font-bold text-[#2aa566]">www.52xjc.com</a>
    </div>
  </div>
);

export default App;
